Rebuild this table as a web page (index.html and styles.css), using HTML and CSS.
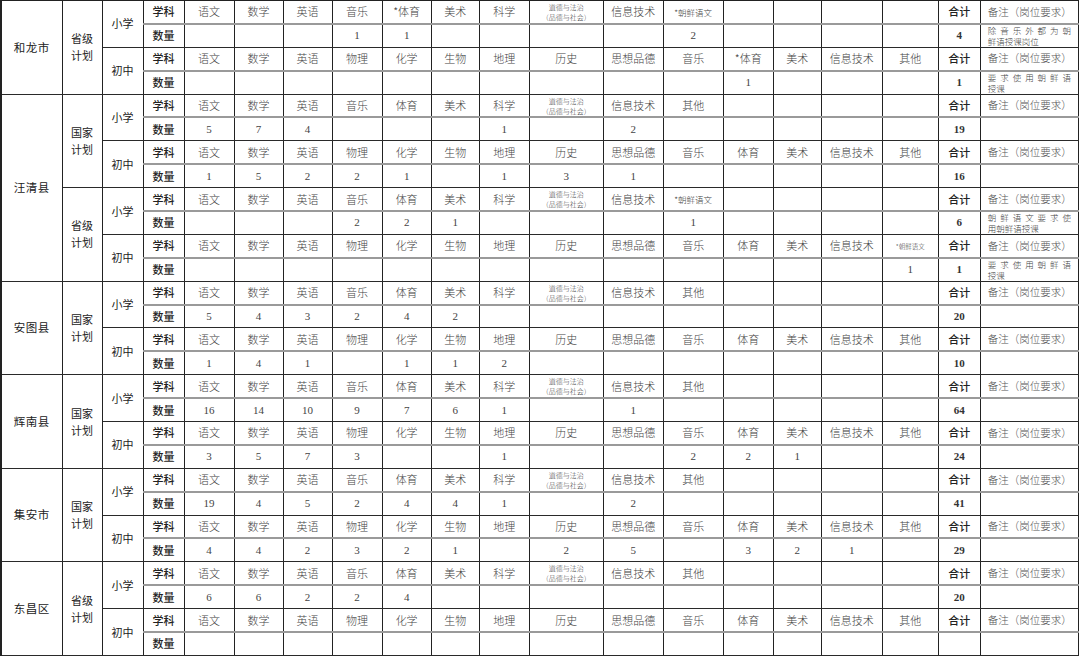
FILE: index.html
```html
<!DOCTYPE html>
<html lang="zh">
<head>
<meta charset="utf-8">
<title>招聘计划</title>
<link rel="stylesheet" href="styles.css">
</head>
<body>
<table class="plan">
<colgroup>
<col class="w61"><col class="w40"><col class="w41"><col class="w41">
<col class="w50"><col class="w49"><col class="w49"><col class="w50"><col class="w49"><col class="w48"><col class="w50">
<col class="w74"><col class="w60"><col class="w60"><col class="w50"><col class="w48"><col class="w61"><col class="w56">
<col class="w42"><col class="w98">
</colgroup>
<tbody>
<!-- 和龙市 -->
<tr class="h">
<td rowspan="4" class="city">和龙市</td>
<td rowspan="4" class="pl">省级<br>计划</td>
<td rowspan="2" class="lv">小学</td>
<td class="k">学科</td>
<td class="s">语文</td><td class="s">数学</td><td class="s">英语</td><td class="s">音乐</td><td class="s">*体育</td><td class="s">美术</td><td class="s">科学</td><td class="s dd">道德与法治<br>（品德与社会）</td><td class="s">信息技术</td><td class="s sm">*朝鲜语文</td><td></td><td></td><td></td><td></td>
<td class="k">合计</td><td class="rm">备注（岗位要求）</td>
</tr>
<tr class="q">
<td class="k">数量</td>
<td></td><td></td><td></td><td class="n">1</td><td class="n">1</td><td></td><td></td><td></td><td></td><td class="n">2</td><td></td><td></td><td></td><td></td>
<td class="tot">4</td><td class="rm note"><span class="l1">除音乐外都为朝</span><span class="l2">鲜语授课岗位</span></td>
</tr>
<tr class="h">
<td rowspan="2" class="lv">初中</td>
<td class="k">学科</td>
<td class="s">语文</td><td class="s">数学</td><td class="s">英语</td><td class="s">物理</td><td class="s">化学</td><td class="s">生物</td><td class="s">地理</td><td class="s">历史</td><td class="s">思想品德</td><td class="s">音乐</td><td class="s">*体育</td><td class="s">美术</td><td class="s">信息技术</td><td class="s">其他</td>
<td class="k">合计</td><td class="rm">备注（岗位要求）</td>
</tr>
<tr class="q">
<td class="k">数量</td>
<td></td><td></td><td></td><td></td><td></td><td></td><td></td><td></td><td></td><td></td><td class="n">1</td><td></td><td></td><td></td>
<td class="tot">1</td><td class="rm note"><span class="l1">要求使用朝鲜语</span><span class="l2">授课</span></td>
</tr>

<!-- 汪清县 国家计划 -->
<tr class="h">
<td rowspan="8" class="city">汪清县</td>
<td rowspan="4" class="pl">国家<br>计划</td>
<td rowspan="2" class="lv">小学</td>
<td class="k">学科</td>
<td class="s">语文</td><td class="s">数学</td><td class="s">英语</td><td class="s">音乐</td><td class="s">体育</td><td class="s">美术</td><td class="s">科学</td><td class="s dd">道德与法治<br>（品德与社会）</td><td class="s">信息技术</td><td class="s">其他</td><td></td><td></td><td></td><td></td>
<td class="k">合计</td><td class="rm">备注（岗位要求）</td>
</tr>
<tr class="q">
<td class="k">数量</td>
<td class="n">5</td><td class="n">7</td><td class="n">4</td><td></td><td></td><td></td><td class="n">1</td><td></td><td class="n">2</td><td></td><td></td><td></td><td></td><td></td>
<td class="tot">19</td><td class="rm"></td>
</tr>
<tr class="h">
<td rowspan="2" class="lv">初中</td>
<td class="k">学科</td>
<td class="s">语文</td><td class="s">数学</td><td class="s">英语</td><td class="s">物理</td><td class="s">化学</td><td class="s">生物</td><td class="s">地理</td><td class="s">历史</td><td class="s">思想品德</td><td class="s">音乐</td><td class="s">体育</td><td class="s">美术</td><td class="s">信息技术</td><td class="s">其他</td>
<td class="k">合计</td><td class="rm">备注（岗位要求）</td>
</tr>
<tr class="q">
<td class="k">数量</td>
<td class="n">1</td><td class="n">5</td><td class="n">2</td><td class="n">2</td><td class="n">1</td><td></td><td class="n">1</td><td class="n">3</td><td class="n">1</td><td></td><td></td><td></td><td></td><td></td>
<td class="tot">16</td><td class="rm"></td>
</tr>

<!-- 汪清县 省级计划 -->
<tr class="h">
<td rowspan="4" class="pl">省级<br>计划</td>
<td rowspan="2" class="lv">小学</td>
<td class="k">学科</td>
<td class="s">语文</td><td class="s">数学</td><td class="s">英语</td><td class="s">音乐</td><td class="s">体育</td><td class="s">美术</td><td class="s">科学</td><td class="s dd">道德与法治<br>（品德与社会）</td><td class="s">信息技术</td><td class="s sm">*朝鲜语文</td><td></td><td></td><td></td><td></td>
<td class="k">合计</td><td class="rm">备注（岗位要求）</td>
</tr>
<tr class="q">
<td class="k">数量</td>
<td></td><td></td><td></td><td class="n">2</td><td class="n">2</td><td class="n">1</td><td></td><td></td><td></td><td class="n">1</td><td></td><td></td><td></td><td></td>
<td class="tot">6</td><td class="rm note"><span class="l1">朝鲜语文要求使</span><span class="l2">用朝鲜语授课</span></td>
</tr>
<tr class="h">
<td rowspan="2" class="lv">初中</td>
<td class="k">学科</td>
<td class="s">语文</td><td class="s">数学</td><td class="s">英语</td><td class="s">物理</td><td class="s">化学</td><td class="s">生物</td><td class="s">地理</td><td class="s">历史</td><td class="s">思想品德</td><td class="s">音乐</td><td class="s">体育</td><td class="s">美术</td><td class="s">信息技术</td><td class="s xs">*朝鲜语文</td>
<td class="k">合计</td><td class="rm">备注（岗位要求）</td>
</tr>
<tr class="q">
<td class="k">数量</td>
<td></td><td></td><td></td><td></td><td></td><td></td><td></td><td></td><td></td><td></td><td></td><td></td><td></td><td class="n">1</td>
<td class="tot">1</td><td class="rm note"><span class="l1">要求使用朝鲜语</span><span class="l2">授课</span></td>
</tr>

<!-- 安图县 -->
<tr class="h">
<td rowspan="4" class="city">安图县</td>
<td rowspan="4" class="pl">国家<br>计划</td>
<td rowspan="2" class="lv">小学</td>
<td class="k">学科</td>
<td class="s">语文</td><td class="s">数学</td><td class="s">英语</td><td class="s">音乐</td><td class="s">体育</td><td class="s">美术</td><td class="s">科学</td><td class="s dd">道德与法治<br>（品德与社会）</td><td class="s">信息技术</td><td class="s">其他</td><td></td><td></td><td></td><td></td>
<td class="k">合计</td><td class="rm">备注（岗位要求）</td>
</tr>
<tr class="q">
<td class="k">数量</td>
<td class="n">5</td><td class="n">4</td><td class="n">3</td><td class="n">2</td><td class="n">4</td><td class="n">2</td><td></td><td></td><td></td><td></td><td></td><td></td><td></td><td></td>
<td class="tot">20</td><td class="rm"></td>
</tr>
<tr class="h">
<td rowspan="2" class="lv">初中</td>
<td class="k">学科</td>
<td class="s">语文</td><td class="s">数学</td><td class="s">英语</td><td class="s">物理</td><td class="s">化学</td><td class="s">生物</td><td class="s">地理</td><td class="s">历史</td><td class="s">思想品德</td><td class="s">音乐</td><td class="s">体育</td><td class="s">美术</td><td class="s">信息技术</td><td class="s">其他</td>
<td class="k">合计</td><td class="rm">备注（岗位要求）</td>
</tr>
<tr class="q">
<td class="k">数量</td>
<td class="n">1</td><td class="n">4</td><td class="n">1</td><td></td><td class="n">1</td><td class="n">1</td><td class="n">2</td><td></td><td></td><td></td><td></td><td></td><td></td><td></td>
<td class="tot">10</td><td class="rm"></td>
</tr>

<!-- 辉南县 -->
<tr class="h">
<td rowspan="4" class="city">辉南县</td>
<td rowspan="4" class="pl">国家<br>计划</td>
<td rowspan="2" class="lv">小学</td>
<td class="k">学科</td>
<td class="s">语文</td><td class="s">数学</td><td class="s">英语</td><td class="s">音乐</td><td class="s">体育</td><td class="s">美术</td><td class="s">科学</td><td class="s dd">道德与法治<br>（品德与社会）</td><td class="s">信息技术</td><td class="s">其他</td><td></td><td></td><td></td><td></td>
<td class="k">合计</td><td class="rm">备注（岗位要求）</td>
</tr>
<tr class="q">
<td class="k">数量</td>
<td class="n">16</td><td class="n">14</td><td class="n">10</td><td class="n">9</td><td class="n">7</td><td class="n">6</td><td class="n">1</td><td></td><td class="n">1</td><td></td><td></td><td></td><td></td><td></td>
<td class="tot">64</td><td class="rm"></td>
</tr>
<tr class="h">
<td rowspan="2" class="lv">初中</td>
<td class="k">学科</td>
<td class="s">语文</td><td class="s">数学</td><td class="s">英语</td><td class="s">物理</td><td class="s">化学</td><td class="s">生物</td><td class="s">地理</td><td class="s">历史</td><td class="s">思想品德</td><td class="s">音乐</td><td class="s">体育</td><td class="s">美术</td><td class="s">信息技术</td><td class="s">其他</td>
<td class="k">合计</td><td class="rm">备注（岗位要求）</td>
</tr>
<tr class="q">
<td class="k">数量</td>
<td class="n">3</td><td class="n">5</td><td class="n">7</td><td class="n">3</td><td></td><td></td><td class="n">1</td><td></td><td></td><td class="n">2</td><td class="n">2</td><td class="n">1</td><td></td><td></td>
<td class="tot">24</td><td class="rm"></td>
</tr>

<!-- 集安市 -->
<tr class="h">
<td rowspan="4" class="city">集安市</td>
<td rowspan="4" class="pl">国家<br>计划</td>
<td rowspan="2" class="lv">小学</td>
<td class="k">学科</td>
<td class="s">语文</td><td class="s">数学</td><td class="s">英语</td><td class="s">音乐</td><td class="s">体育</td><td class="s">美术</td><td class="s">科学</td><td class="s dd">道德与法治<br>（品德与社会）</td><td class="s">信息技术</td><td class="s">其他</td><td></td><td></td><td></td><td></td>
<td class="k">合计</td><td class="rm">备注（岗位要求）</td>
</tr>
<tr class="q">
<td class="k">数量</td>
<td class="n">19</td><td class="n">4</td><td class="n">5</td><td class="n">2</td><td class="n">4</td><td class="n">4</td><td class="n">1</td><td></td><td class="n">2</td><td></td><td></td><td></td><td></td><td></td>
<td class="tot">41</td><td class="rm"></td>
</tr>
<tr class="h">
<td rowspan="2" class="lv">初中</td>
<td class="k">学科</td>
<td class="s">语文</td><td class="s">数学</td><td class="s">英语</td><td class="s">物理</td><td class="s">化学</td><td class="s">生物</td><td class="s">地理</td><td class="s">历史</td><td class="s">思想品德</td><td class="s">音乐</td><td class="s">体育</td><td class="s">美术</td><td class="s">信息技术</td><td class="s">其他</td>
<td class="k">合计</td><td class="rm">备注（岗位要求）</td>
</tr>
<tr class="q">
<td class="k">数量</td>
<td class="n">4</td><td class="n">4</td><td class="n">2</td><td class="n">3</td><td class="n">2</td><td class="n">1</td><td></td><td class="n">2</td><td class="n">5</td><td></td><td class="n">3</td><td class="n">2</td><td class="n">1</td><td></td>
<td class="tot">29</td><td class="rm"></td>
</tr>

<!-- 东昌区 -->
<tr class="h">
<td rowspan="4" class="city">东昌区</td>
<td rowspan="4" class="pl">省级<br>计划</td>
<td rowspan="2" class="lv">小学</td>
<td class="k">学科</td>
<td class="s">语文</td><td class="s">数学</td><td class="s">英语</td><td class="s">音乐</td><td class="s">体育</td><td class="s">美术</td><td class="s">科学</td><td class="s dd">道德与法治<br>（品德与社会）</td><td class="s">信息技术</td><td class="s">其他</td><td></td><td></td><td></td><td></td>
<td class="k">合计</td><td class="rm">备注（岗位要求）</td>
</tr>
<tr class="q">
<td class="k">数量</td>
<td class="n">6</td><td class="n">6</td><td class="n">2</td><td class="n">2</td><td class="n">4</td><td></td><td></td><td></td><td></td><td></td><td></td><td></td><td></td><td></td>
<td class="tot">20</td><td class="rm"></td>
</tr>
<tr class="h">
<td rowspan="2" class="lv">初中</td>
<td class="k">学科</td>
<td class="s">语文</td><td class="s">数学</td><td class="s">英语</td><td class="s">物理</td><td class="s">化学</td><td class="s">生物</td><td class="s">地理</td><td class="s">历史</td><td class="s">思想品德</td><td class="s">音乐</td><td class="s">体育</td><td class="s">美术</td><td class="s">信息技术</td><td class="s">其他</td>
<td class="k">合计</td><td class="rm">备注（岗位要求）</td>
</tr>
<tr class="q">
<td class="k">数量</td>
<td></td><td></td><td></td><td></td><td></td><td></td><td></td><td></td><td></td><td></td><td></td><td></td><td></td><td></td>
<td class="tot"></td><td class="rm"></td>
</tr>
</tbody>
</table>
</body>
</html>
```

FILE: styles.css
```css
html, body {
  margin: 0;
  padding: 0;
  background: #ffffff;
}

.plan {
  border-collapse: collapse;
  table-layout: fixed;
  width: 1079px;
  font-family: "Noto Sans CJK SC", "Noto Sans", sans-serif;
  font-size: 11px;
  color: #2a2a2a;
  border-top: 1px solid #222;
  border-left: 2px solid #222;
  border-right: 1px solid #222;
}

.w40 { width: 40px; }
.w41 { width: 41px; }
.w42 { width: 42px; }
.w48 { width: 48px; }
.w49 { width: 49px; }
.w50 { width: 50px; }
.w56 { width: 56px; }
.w60 { width: 60px; }
.w61 { width: 61px; }
.w74 { width: 74px; }
.w98 { width: 98px; }

.plan tr {
  height: 23.4px;
}

.plan td {
  padding: 0;
  border-left: 1px solid #222;
  border-right: 1px solid #222;
  text-align: center;
  vertical-align: middle;
  line-height: 1;
  white-space: nowrap;
  overflow: hidden;
}

.plan tr.h > td {
  border-bottom: 2px solid #9a9a9a;
}

.plan tr.q > td {
  border-bottom: 1px solid #2a2a2a;
}

.plan tr > td.city,
.plan tr > td.pl,
.plan tr > td.lv {
  border-bottom: 1px solid #2a2a2a;
}

.plan td.city {
  font-size: 11.5px;
  color: #222;
  letter-spacing: 0.5px;
}

.plan td.pl {
  line-height: 17px;
  color: #222;
  white-space: normal;
}

.plan td.lv {
  color: #222;
}

.plan td.k {
  color: #222;
  font-weight: 500;
}

.plan td.s {
  color: #444;
  font-weight: 300;
}

.plan td.s.sm {
  font-size: 8.5px;
}

.plan td.s.xs {
  font-size: 6.5px;
}

.plan td.s.dd {
  font-size: 7px;
  line-height: 10px;
  white-space: normal;
}

.plan td.n {
  font-family: "Liberation Serif", "DejaVu Serif", serif;
  font-size: 11px;
  color: #444;
}

.plan td.tot {
  font-family: "Liberation Serif", "DejaVu Serif", serif;
  font-size: 11px;
  font-weight: bold;
  color: #333;
}

.plan td.rm {
  text-align: left;
  padding: 0 7px;
  font-size: 10.5px;
  color: #555;
  font-weight: 300;
}

.plan td.note {
  white-space: normal;
  font-size: 8.5px;
  line-height: 10.6px;
  color: #444;
}

.note .l1,
.note .l2 {
  display: block;
  height: 10.6px;
}

.note .l1 {
  text-align: justify;
  text-align-last: justify;
}
```
